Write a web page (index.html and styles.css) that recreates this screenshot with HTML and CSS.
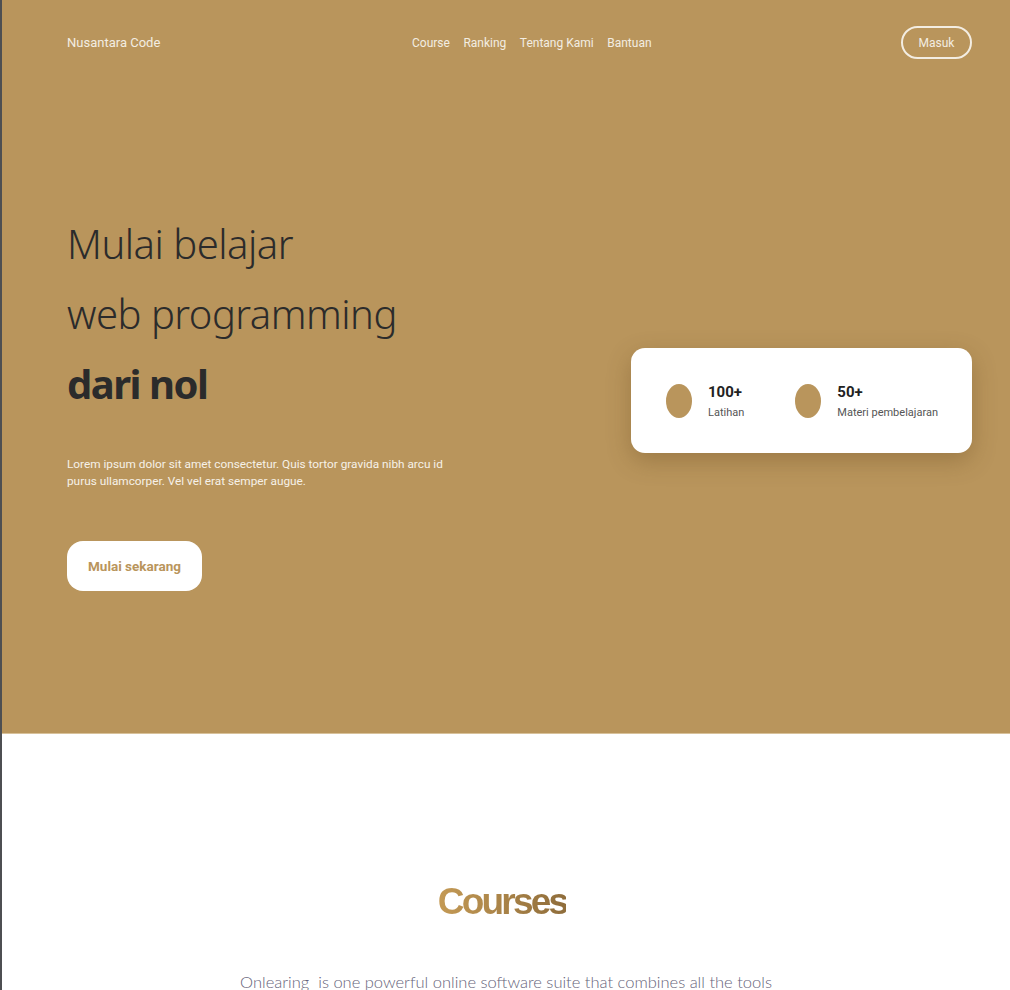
FILE: index.html
```html
<!DOCTYPE html>
<html lang="id">
<head>
<meta charset="utf-8">
<title>Nusantara Code</title>
<link rel="stylesheet" href="styles.css">
</head>
<body>
<div class="page">
  <section class="hero">
    <header class="nav">
      <div class="logo">Nusantara Code</div>
      <nav class="links">
        <a href="#">Course</a>
        <a href="#">Ranking</a>
        <a href="#">Tentang Kami</a>
        <a href="#">Bantuan</a>
      </nav>
      <a class="login" href="#">Masuk</a>
    </header>
    <div class="hero-body">
      <div class="hero-left">
        <h1 class="title">
          <span class="line">Mulai belajar</span>
          <span class="line">web programming</span>
          <span class="line strong">dari nol</span>
        </h1>
        <p class="lead">Lorem ipsum dolor sit amet consectetur. Quis tortor gravida nibh arcu id purus ullamcorper. Vel vel erat semper augue.</p>
        <a class="cta" href="#">Mulai sekarang</a>
      </div>
      <div class="stats">
        <div class="stat">
          <span class="dot"></span>
          <div class="stat-text">
            <div class="num">100+</div>
            <div class="label">Latihan</div>
          </div>
        </div>
        <div class="stat">
          <span class="dot"></span>
          <div class="stat-text">
            <div class="num">50+</div>
            <div class="label">Materi pembelajaran</div>
          </div>
        </div>
      </div>
    </div>
  </section>
  <section class="courses">
    <h2 class="courses-title">Courses</h2>
    <p class="courses-sub">Onlearing&nbsp; is one powerful online software suite that combines all the tools</p>
  </section>
</div>
</body>
</html>
```
FILE: styles.css
```css
* { box-sizing: border-box; }
html, body { margin: 0; padding: 0; }
body {
  font-family: "Open Sans", Roboto, sans-serif;
  background: #fff;
  overflow: hidden;
}
.page {
  border-left: 2px solid #4d4f52;
  min-height: 990px;
}
.hero {
  background: #b9955c;
  height: 734px;
  border-bottom: 1px solid #d8c19a;
  padding: 0 38px 0 65px;
}
.nav {
  height: 85px;
  display: flex;
  align-items: center;
}
.logo {
  color: #f3ede2;
  font-family: Roboto, sans-serif;
  font-size: 13px;
  width: 345px;
}
.links {
  display: flex;
  gap: 13.5px;
}
.links a {
  color: #f3ede2;
  text-decoration: none;
  font-family: Roboto, sans-serif;
  font-size: 12px;
}
.login {
  margin-left: auto;
  color: #f3ede2;
  text-decoration: none;
  font-family: Roboto, sans-serif;
  font-size: 12px;
  border: 2px solid #f3ede2;
  border-radius: 17px;
  width: 71px;
  height: 33px;
  display: flex;
  align-items: center;
  justify-content: center;
}
.hero-body {
  display: flex;
  justify-content: space-between;
  align-items: flex-start;
  padding-top: 124px;
}
.title {
  margin: 0;
  font-family: "Noto Sans", sans-serif;
  font-weight: 300;
  color: #2b2b2b;
  font-size: 40px;
  line-height: 70px;
  letter-spacing: -0.5px;
}
.title .line { display: block; }
.title .strong { font-weight: 700; letter-spacing: -1.5px; }
.lead {
  margin: 37px 0 0;
  width: 400px;
  color: #f6f1e8;
  font-family: Roboto, sans-serif;
  font-size: 11.8px;
  line-height: 17px;
}
.cta {
  display: inline-flex;
  align-items: center;
  justify-content: center;
  margin-top: 51px;
  width: 135px;
  height: 50px;
  background: #fff;
  border-radius: 16px;
  color: #b9955c;
  font-family: Roboto, sans-serif;
  font-weight: 700;
  font-size: 13.5px;
  text-decoration: none;
}
.stats {
  margin-top: 139px;
  width: 341px;
  height: 105px;
  background: #fff;
  border-radius: 14px;
  box-shadow: 0 8px 24px rgba(90, 60, 20, 0.3);
  display: flex;
  align-items: center;
  padding: 0 0 0 35px;
  gap: 51px;
}
.stat {
  display: flex;
  align-items: center;
  gap: 16px;
}
.dot {
  width: 26px;
  height: 34px;
  border-radius: 50%;
  background: #b9955c;
  flex: none;
}
.num {
  font-family: Roboto, sans-serif;
  font-weight: 700;
  font-size: 15px;
  color: #222;
  line-height: 18px;
}
.label {
  font-family: Roboto, sans-serif;
  font-size: 11px;
  color: #555;
  margin-top: 5px;
}
.courses {
  text-align: center;
  padding-top: 146px;
}
.courses-title {
  margin: 0 8px 0 0;
  display: inline-block;
  font-family: "Liberation Sans", Arial, sans-serif;
  font-weight: 700;
  font-size: 37px;
  letter-spacing: -2.8px;
  line-height: 44px;
  background: linear-gradient(90deg, #c49a55 0%, #8f6d3b 100%);
  -webkit-background-clip: text;
  background-clip: text;
  color: transparent;
}
.courses-sub {
  margin: 48px 0 0;
  font-family: Lato, sans-serif;
  font-weight: 300;
  font-size: 16.5px;
  color: #66647a;
}
```
